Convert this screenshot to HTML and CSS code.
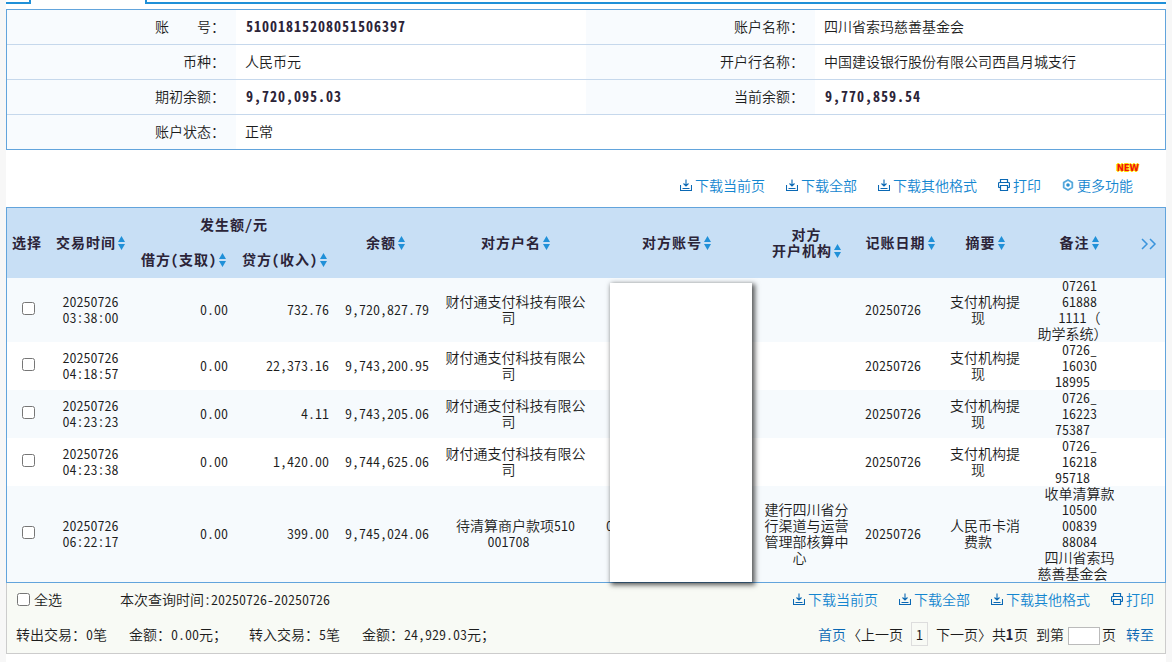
FILE: index.html
```html
<!DOCTYPE html>
<html lang="zh-CN">
<head>
    <meta charset="UTF-8">
    <title>账户明细查询</title>
    <link rel="stylesheet" href="styles.css">
</head>
<body>
    <svg class="defs" width="0" height="0">
        <symbol id="i-down" viewBox="0 0 12 12">
            <path d="M.5 6v5.500h11V6M2.500 9.500h7M6 .5v6.500M3.500 4.500L6 7l2.500-2.500" fill="none" stroke="#0a68b4" stroke-width="1.100"/>
        </symbol>
        <symbol id="i-print" viewBox="0 0 12 12">
            <path d="M2.500 3.500v-3h7v3M2.500 8.500h-1q-1 0-1-1v-3q0-1 1-1h9q1 0 1 1v3q0 1-1 1h-1M2.500 6.500h7v5h-7z" fill="none" stroke="#0a68b4" stroke-width="1.200"/>
        </symbol>
        <symbol id="i-more" viewBox="0 0 12 12">
            <path d="M6 1l4.300 2.500v5L6 11 1.700 8.500v-5z" fill="none" stroke="#55a8dc" stroke-width="1.800" stroke-linejoin="round"/>
            <circle cx="6" cy="6" r="1.800" fill="#2a90d0"/>
        </symbol>
        <symbol id="i-sort" viewBox="0 0 7 14">
            <path d="M3.500 0L7 6H0zM3.500 14L0 8h7z" fill="#2090d8"/>
        </symbol>
    </svg>

    <div class="page">
        <div class="tabs">
            <div class="tab-left"></div>
            <div class="tab-right"></div>
        </div>

        <table class="info">
            <colgroup><col class="w-label"><col class="w-value"><col class="w-label"><col></colgroup>
            <tr>
                <th><span class="wide">账</span>号：</th><td><b>51001815208051506397</b></td>
                <th>账户名称：</th><td>四川省索玛慈善基金会</td>
            </tr>
            <tr>
                <th>币种：</th><td>人民币元</td>
                <th>开户行名称：</th><td>中国建设银行股份有限公司西昌月城支行</td>
            </tr>
            <tr>
                <th>期初余额：</th><td><b>9,720,095.03</b></td>
                <th>当前余额：</th><td><b>9,770,859.54</b></td>
            </tr>
            <tr>
                <th>账户状态：</th><td colspan="3">正常</td>
            </tr>
        </table>

        <div class="tools tools-top">
            <a><svg><use href="#i-down"/></svg>下载当前页</a>
            <a><svg><use href="#i-down"/></svg>下载全部</a>
            <a><svg><use href="#i-down"/></svg>下载其他格式</a>
            <a><svg><use href="#i-print"/></svg>打印</a>
            <a class="more"><svg><use href="#i-more"/></svg>更多功能<span class="new">NEW</span></a>
        </div>

        <div class="list">
            <table class="data">
                <colgroup>
                    <col class="c-check"><col class="c-time"><col class="c-out"><col class="c-in">
                    <col class="c-bal"><col class="c-name"><col class="c-acct"><col class="c-org">
                    <col class="c-date"><col class="c-sum"><col class="c-note"><col class="c-next">
                </colgroup>
                <thead>
                    <tr>
                        <th rowspan="2">选择</th>
                        <th rowspan="2">交易时间<svg class="sort"><use href="#i-sort"/></svg></th>
                        <th colspan="2" class="half">发生额/元</th>
                        <th rowspan="2">余额<svg class="sort"><use href="#i-sort"/></svg></th>
                        <th rowspan="2">对方户名<svg class="sort"><use href="#i-sort"/></svg></th>
                        <th rowspan="2">对方账号<svg class="sort"><use href="#i-sort"/></svg></th>
                        <th rowspan="2">对方<br>开户机构<svg class="sort"><use href="#i-sort"/></svg></th>
                        <th rowspan="2">记账日期<svg class="sort"><use href="#i-sort"/></svg></th>
                        <th rowspan="2">摘要<svg class="sort"><use href="#i-sort"/></svg></th>
                        <th rowspan="2">备注<svg class="sort"><use href="#i-sort"/></svg></th>
                        <th rowspan="2"><svg class="next" viewBox="0 0 16 12"><path d="M1 1l5 5-5 5M9 1l5 5-5 5" fill="none" stroke="#3a94dc" stroke-width="1.500"/></svg></th>
                    </tr>
                    <tr>
                        <th class="half">借方(支取)<svg class="sort"><use href="#i-sort"/></svg></th>
                        <th class="half">贷方(收入)<svg class="sort"><use href="#i-sort"/></svg></th>
                    </tr>
                </thead>
                <tbody>
                    <tr class="h4">
                        <td><input type="checkbox"></td><td>20250726<br>03:38:00</td>
                        <td class="num">0.00</td><td class="num">732.76</td><td class="num">9,720,827.79</td>
                        <td>财付通支付科技有限公<br><span class="last">司</span></td><td></td><td></td>
                        <td class="date">20250726</td><td>支付机构提<br><span class="last">现</span></td>
                        <td class="note"><div>07261<br>61888<br>1111<span class="full">（</span><br><span class="last">助学系统<span class="full">）</span></span></div></td><td></td>
                    </tr>
                    <tr>
                        <td><input type="checkbox"></td><td>20250726<br>04:18:57</td>
                        <td class="num">0.00</td><td class="num">22,373.16</td><td class="num">9,743,200.95</td>
                        <td>财付通支付科技有限公<br><span class="last">司</span></td><td></td><td></td>
                        <td class="date">20250726</td><td>支付机构提<br><span class="last">现</span></td>
                        <td class="note"><div>0726_<br>16030<br><span class="last">18995</span></div></td><td></td>
                    </tr>
                    <tr>
                        <td><input type="checkbox"></td><td>20250726<br>04:23:23</td>
                        <td class="num">0.00</td><td class="num">4.11</td><td class="num">9,743,205.06</td>
                        <td>财付通支付科技有限公<br><span class="last">司</span></td><td></td><td></td>
                        <td class="date">20250726</td><td>支付机构提<br><span class="last">现</span></td>
                        <td class="note"><div>0726_<br>16223<br><span class="last">75387</span></div></td><td></td>
                    </tr>
                    <tr>
                        <td><input type="checkbox"></td><td>20250726<br>04:23:38</td>
                        <td class="num">0.00</td><td class="num">1,420.00</td><td class="num">9,744,625.06</td>
                        <td>财付通支付科技有限公<br><span class="last">司</span></td><td></td><td></td>
                        <td class="date">20250726</td><td>支付机构提<br><span class="last">现</span></td>
                        <td class="note"><div>0726_<br>16218<br><span class="last">95718</span></div></td><td></td>
                    </tr>
                    <tr class="h6">
                        <td><input type="checkbox"></td><td>20250726<br>06:22:17</td>
                        <td class="num">0.00</td><td class="num">399.00</td><td class="num">9,745,024.06</td>
                        <td>待清算商户款项510<br><span class="last">001708</span></td><td class="acct">0<br>&nbsp;</td>
                        <td>建行四川省分<br>行渠道与运营<br>管理部核算中<br><span class="last">心</span></td>
                        <td class="date">20250726</td><td>人民币卡消<br><span class="last">费款</span></td>
                        <td class="note"><div>收单清算款<br>10500<br>00839<br>88084<br>四川省索玛<br><span class="last">慈善基金会</span></div></td><td></td>
                    </tr>
                </tbody>
            </table>
            <div class="cover"></div>
        </div>

        <div class="foot">
            <div class="row">
                <label><input type="checkbox">全选</label>
                <span class="range">本次查询时间:20250726-20250726</span>
                <div class="tools">
                    <a><svg><use href="#i-down"/></svg>下载当前页</a>
                    <a><svg><use href="#i-down"/></svg>下载全部</a>
                    <a><svg><use href="#i-down"/></svg>下载其他格式</a>
                    <a><svg><use href="#i-print"/></svg>打印</a>
                </div>
            </div>
            <div class="row">
                <div class="sums">
                    <span>转出交易：0笔</span><span>金额：0.00元；</span><span>转入交易：5笔</span><span>金额：24,929.03元；</span>
                </div>
                <div class="pager">
                    <a class="first">首页</a>
                    <span class="prev">〈上一页</span>
                    <span class="cur">1</span>
                    <span class="nextpage">下一页〉</span>
                    <span class="total">共<b>1</b>页</span>
                    <span>到第</span>
                    <input type="text">
                    <span>页</span>
                    <a class="go">转至</a>
                </div>
            </div>
        </div>
    </div>
</body>
</html>
```

FILE: styles.css
```css
body {
    margin: 0;
    height: 662px;
    overflow: hidden;
    background: #f7f7f7;
    color: #1c1c1c;
    font: 14px/16px "Noto Sans CJK SC", sans-serif;
    font-weight: 350;
    font-feature-settings: "hwid";
}
.defs {
    display: block;
    position: absolute;
}
.page {
    width: 1160px;
    height: 662px;
    margin-left: 6px;
    background: #fff;
}
b {
    font-weight: bold;
    letter-spacing: 1px;
    color: #2b2438;
}

/* 顶部标签 */
.tabs {
    display: flex;
    height: 4px;
    margin-bottom: 5px;
}
.tabs div {
    box-sizing: border-box;
    border-bottom: 2px solid #2090d8;
}
.tab-left {
    width: 25px;
    border-right: 2px solid #2090d8;
}
.tab-right {
    flex: 1;
    margin-left: 114px;
    border-left: 2px solid #2090d8;
}

/* 账户信息 */
table {
    border-collapse: separate;
    border-spacing: 0;
    table-layout: fixed;
}
.info {
    width: 1160px;
    border: 1px solid #62a4dc;
}
.w-label { width: 229px; }
.w-value { width: 350px; }
.info th, .info td {
    box-sizing: border-box;
    height: 35px;
    padding: 0 11px 2px 9px;
    border-bottom: 1px solid #c6d8ec;
    font-weight: inherit;
    text-align: left;
}
.info th {
    background: #f8fbfe;
    text-align: right;
}
.info tr:last-child th, .info tr:last-child td {
    height: 34px;
    border-bottom: 0;
}
.info b {
    margin-left: 1px;
}
.wide {
    margin-right: 28px;
}

/* 操作链接 */
.tools {
    display: flex;
    gap: 21px;
}
.tools a {
    display: flex;
    align-items: center;
    color: #1486d0;
}
.tools svg {
    width: 12px;
    height: 12px;
    margin-right: 3px;
}
.tools-top {
    justify-content: flex-end;
    height: 16px;
    padding: 27px 33px 14px 0;
}
.more {
    position: relative;
}
.new {
    position: absolute;
    right: -6px;
    top: -15px;
    font: bold 8.5px/12px "DejaVu Sans", sans-serif;
    color: #f01010;
    text-shadow: 1px 0 0 #ffe000, -1px 0 0 #ffe000, 0 1px 0 #ffe000, 0 -1px 0 #ffe000;
}

/* 交易明细 */
.list {
    position: relative;
}
.data {
    width: 1160px;
    border: 1px solid #62a4dc;
}
.c-check { width: 41px; }
.c-time { width: 86px; }
.c-out, .c-in { width: 101px; }
.c-bal { width: 100px; }
.c-name { width: 160px; }
.c-acct { width: 162px; }
.c-org { width: 98px; }
.c-date { width: 89px; }
.c-sum { width: 81px; }
.c-note { width: 107px; }
.c-next { width: 32px; }
.data th, .data td {
    box-sizing: border-box;
    padding: 0 1px 2px 0;
    text-align: center;
    white-space: nowrap;
}
.data th {
    height: 35px;
    background: #c8dff5;
    color: #2b2438;
    font-weight: bold;
    letter-spacing: 1px;
}
.data .half {
    padding: 0 2px 3px 0;
}
.data td {
    height: 48px;
}
.data .h4 td { height: 64px; }
.data .h6 td { height: 96px; }
.data tbody tr:nth-child(odd) {
    background: #f6fafd;
}
.data .num {
    padding-right: 7px;
    text-align: right;
}
.data .date {
    padding-left: 9px;
    text-align: left;
}
.data .acct {
    padding-left: 10px;
    text-align: left;
}
.data .note {
    padding: 0;
}
.note div {
    position: relative;
    top: -1px;
}
.last {
    padding-right: 14px;
}
.full {
    font-feature-settings: normal;
}
.sort {
    width: 7px;
    height: 14px;
    margin-left: 2px;
    vertical-align: -2px;
}
.next {
    width: 16px;
    height: 12px;
    vertical-align: middle;
}
input[type="checkbox"] {
    width: 13px;
    height: 13px;
    margin: 0;
}
.data input {
    margin-left: 3px;
    vertical-align: 0;
}
.cover {
    position: absolute;
    left: 604px;
    top: 76px;
    width: 142px;
    height: 299px;
    background: #fff;
    box-shadow: 2px 2px 5px 1px rgba(0, 0, 0, .65);
}

/* 底部 */
.foot {
    height: 70px;
    border: 1px solid #ccc;
    border-top: 0;
    background: #f8faf5;
}
.row {
    display: flex;
    box-sizing: border-box;
    align-items: center;
    height: 35px;
    padding: 0 11px 3px 10px;
}
label {
    display: flex;
    align-items: center;
}
label input[type="checkbox"] {
    margin-right: 4px;
}
.range {
    margin-left: 58px;
}
.row .tools, .pager {
    margin-left: auto;
}
.sums {
    display: flex;
    gap: 22px;
    margin-left: -1px;
}
.pager {
    display: flex;
    align-items: center;
}
.pager a {
    color: #0a68b4;
}
.prev {
    margin-left: 1px;
}
.cur {
    box-sizing: border-box;
    width: 17px;
    height: 24px;
    margin: 0 8px;
    border: 1px solid #ddd;
    line-height: 22px;
    text-align: center;
}
.total {
    margin-right: 8px;
}
.pager input {
    box-sizing: border-box;
    width: 32px;
    height: 18px;
    margin: 3px 2px 0 4px;
    padding: 0;
    border: 1px solid #bbb;
    background: #fff;
}
.go {
    margin-left: 10px;
}
```
